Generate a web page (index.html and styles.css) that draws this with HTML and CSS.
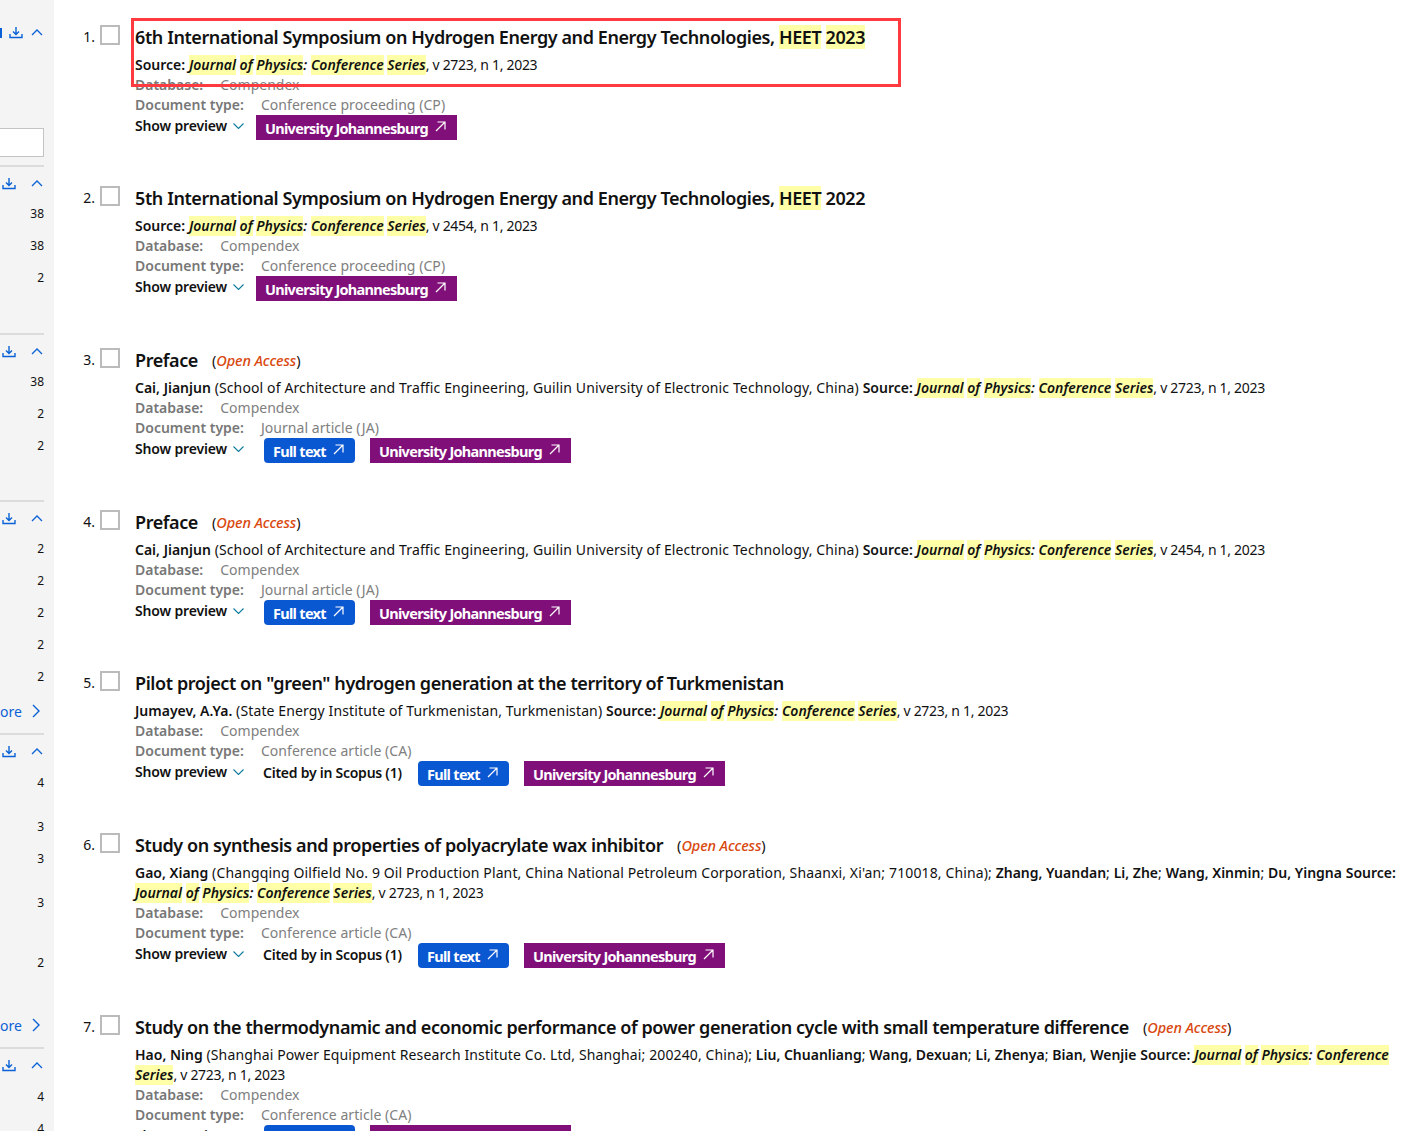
FILE: index.html
```html
<!DOCTYPE html>
<html lang="en">
<head>
<meta charset="utf-8">
<title>Results</title>
<link rel="stylesheet" href="styles.css">
</head>
<body>
<svg class="defs" width="0" height="0" aria-hidden="true">
  <symbol id="dl" viewBox="0 0 14 13"><path d="M7 1v7M4 5.5 7 8.5l3-3M1 8v3.5h12V8" fill="none" stroke="currentColor" stroke-width="1.4"/></symbol>
  <symbol id="up" viewBox="0 0 12 7"><path d="M1 6l5-5 5 5" fill="none" stroke="currentColor" stroke-width="1.3"/></symbol>
  <symbol id="right" viewBox="0 0 8 14"><path d="M1 1l6 6-6 6" fill="none" stroke="currentColor" stroke-width="1.4"/></symbol>
  <symbol id="down" viewBox="0 0 11 6"><path d="M.5.5l5 5 5-5" fill="none" stroke="currentColor" stroke-width="1.1"/></symbol>
  <symbol id="ext" viewBox="0 0 11 11"><path d="M1 10 10 1M2.5 1H10v7.5" fill="none" stroke="currentColor" stroke-width="1.2"/></symbol>
</svg>
<div class="shell">
  <aside class="side">
    <div class="head head-first"><span class="tick"></span><svg class="i-dl"><use href="#dl"/></svg><svg class="i-up"><use href="#up"/></svg></div>
    <div class="box"></div>
    <hr class="rule">
    <div class="head"><svg class="i-dl"><use href="#dl"/></svg><svg class="i-up"><use href="#up"/></svg></div>
    <div class="n">38</div><div class="n">38</div><div class="n">2</div>
    <hr class="rule r2">
    <div class="head"><svg class="i-dl"><use href="#dl"/></svg><svg class="i-up"><use href="#up"/></svg></div>
    <div class="n">38</div><div class="n">2</div><div class="n">2</div>
    <hr class="rule r3">
    <div class="head"><svg class="i-dl"><use href="#dl"/></svg><svg class="i-up"><use href="#up"/></svg></div>
    <div class="n">2</div><div class="n">2</div><div class="n">2</div><div class="n">2</div><div class="n">2</div>
    <div class="more"><span class="more-t">more</span><svg class="i-right"><use href="#right"/></svg></div>
    <hr class="rule r4">
    <div class="head"><svg class="i-dl"><use href="#dl"/></svg><svg class="i-up"><use href="#up"/></svg></div>
    <div class="n low">4</div><div class="n n2">3</div><div class="n">3</div><div class="n n2">3</div><div class="n n3">2</div>
    <div class="more m2"><span class="more-t">more</span><svg class="i-right"><use href="#right"/></svg></div>
    <hr class="rule r4">
    <div class="head"><svg class="i-dl"><use href="#dl"/></svg><svg class="i-up"><use href="#up"/></svg></div>
    <div class="n low">4</div><div class="n">4</div>
  </aside>
  <main class="results">

    <article class="item">
      <div class="num">1.</div><div class="cb"></div>
      <div class="body">
        <div class="redbox"></div>
        <h3 class="title">6th International Symposium on Hydrogen Energy and Energy Technologies, <mark>HEET</mark> <mark>2023</mark></h3>
        <p class="src"><b>Source:</b> <i><mark>Journal</mark> <mark>of</mark> <mark>Physics</mark></i><i>:</i> <i><mark>Conference</mark> <mark>Series</mark></i><span class="vol">, v 2723, n 1, 2023</span></p>
        <p class="meta"><b>Database:</b><span class="db">Compendex</span></p>
        <p class="meta"><b>Document type:</b><span class="dt">Conference proceeding (CP)</span></p>
        <div class="acts"><span class="sp">Show preview<svg class="i-down"><use href="#down"/></svg></span><a class="uni">University Johannesburg<svg class="i-ext"><use href="#ext"/></svg></a></div>
      </div>
    </article>

    <article class="item">
      <div class="num">2.</div><div class="cb"></div>
      <div class="body">
        <h3 class="title">5th International Symposium on Hydrogen Energy and Energy Technologies, <mark>HEET</mark> 2022</h3>
        <p class="src"><b>Source:</b> <i><mark>Journal</mark> <mark>of</mark> <mark>Physics</mark></i><i>:</i> <i><mark>Conference</mark> <mark>Series</mark></i><span class="vol">, v 2454, n 1, 2023</span></p>
        <p class="meta"><b>Database:</b><span class="db">Compendex</span></p>
        <p class="meta"><b>Document type:</b><span class="dt">Conference proceeding (CP)</span></p>
        <div class="acts"><span class="sp">Show preview<svg class="i-down"><use href="#down"/></svg></span><a class="uni">University Johannesburg<svg class="i-ext"><use href="#ext"/></svg></a></div>
      </div>
    </article>

    <article class="item">
      <div class="num">3.</div><div class="cb"></div>
      <div class="body">
        <h3 class="title">Preface<span class="oa">(<i>Open Access</i>)</span></h3>
        <p class="src"><b>Cai, Jianjun</b> (School of Architecture and Traffic Engineering, Guilin University of Electronic Technology, China) <b>Source:</b> <i><mark>Journal</mark> <mark>of</mark> <mark>Physics</mark></i><i>:</i> <i><mark>Conference</mark> <mark>Series</mark></i><span class="vol">, v 2723, n 1, 2023</span></p>
        <p class="meta"><b>Database:</b><span class="db">Compendex</span></p>
        <p class="meta"><b>Document type:</b><span class="dt">Journal article (JA)</span></p>
        <div class="acts"><span class="sp">Show preview<svg class="i-down"><use href="#down"/></svg></span><a class="full first">Full text<svg class="i-ext"><use href="#ext"/></svg></a><a class="uni">University Johannesburg<svg class="i-ext"><use href="#ext"/></svg></a></div>
      </div>
    </article>

    <article class="item">
      <div class="num">4.</div><div class="cb"></div>
      <div class="body">
        <h3 class="title">Preface<span class="oa">(<i>Open Access</i>)</span></h3>
        <p class="src"><b>Cai, Jianjun</b> (School of Architecture and Traffic Engineering, Guilin University of Electronic Technology, China) <b>Source:</b> <i><mark>Journal</mark> <mark>of</mark> <mark>Physics</mark></i><i>:</i> <i><mark>Conference</mark> <mark>Series</mark></i><span class="vol">, v 2454, n 1, 2023</span></p>
        <p class="meta"><b>Database:</b><span class="db">Compendex</span></p>
        <p class="meta"><b>Document type:</b><span class="dt">Journal article (JA)</span></p>
        <div class="acts"><span class="sp">Show preview<svg class="i-down"><use href="#down"/></svg></span><a class="full first">Full text<svg class="i-ext"><use href="#ext"/></svg></a><a class="uni">University Johannesburg<svg class="i-ext"><use href="#ext"/></svg></a></div>
      </div>
    </article>

    <article class="item">
      <div class="num">5.</div><div class="cb"></div>
      <div class="body">
        <h3 class="title">Pilot project on "green" hydrogen generation at the territory of Turkmenistan</h3>
        <p class="src"><b>Jumayev, A.Ya.</b> (State Energy Institute of Turkmenistan, Turkmenistan) <b>Source:</b> <i><mark>Journal</mark> <mark>of</mark> <mark>Physics</mark></i><i>:</i> <i><mark>Conference</mark> <mark>Series</mark></i><span class="vol">, v 2723, n 1, 2023</span></p>
        <p class="meta"><b>Database:</b><span class="db">Compendex</span></p>
        <p class="meta"><b>Document type:</b><span class="dt">Conference article (CA)</span></p>
        <div class="acts"><span class="sp">Show preview<svg class="i-down"><use href="#down"/></svg></span><span class="cited">Cited by in Scopus (1)</span><a class="full">Full text<svg class="i-ext"><use href="#ext"/></svg></a><a class="uni">University Johannesburg<svg class="i-ext"><use href="#ext"/></svg></a></div>
      </div>
    </article>

    <article class="item">
      <div class="num">6.</div><div class="cb"></div>
      <div class="body">
        <h3 class="title">Study on synthesis and properties of polyacrylate wax inhibitor<span class="oa">(<i>Open Access</i>)</span></h3>
        <p class="src"><b>Gao, Xiang</b> (Changqing Oilfield No. 9 Oil Production Plant, China National Petroleum Corporation, Shaanxi, Xi'an; 710018, China); <b>Zhang, Yuandan</b>; <b>Li, Zhe</b>; <b>Wang, Xinmin</b>; <b>Du, Yingna</b> <b>Source:</b> <i><mark>Journal</mark> <mark>of</mark> <mark>Physics</mark></i><i>:</i> <i><mark>Conference</mark> <mark>Series</mark></i><span class="vol">, v 2723, n 1, 2023</span></p>
        <p class="meta"><b>Database:</b><span class="db">Compendex</span></p>
        <p class="meta"><b>Document type:</b><span class="dt">Conference article (CA)</span></p>
        <div class="acts"><span class="sp">Show preview<svg class="i-down"><use href="#down"/></svg></span><span class="cited">Cited by in Scopus (1)</span><a class="full">Full text<svg class="i-ext"><use href="#ext"/></svg></a><a class="uni">University Johannesburg<svg class="i-ext"><use href="#ext"/></svg></a></div>
      </div>
    </article>

    <article class="item">
      <div class="num">7.</div><div class="cb"></div>
      <div class="body">
        <h3 class="title">Study on the thermodynamic and economic performance of power generation cycle with small temperature difference<span class="oa">(<i>Open Access</i>)</span></h3>
        <p class="src"><b>Hao, Ning</b> (Shanghai Power Equipment Research Institute Co. Ltd, Shanghai; 200240, China); <b>Liu, Chuanliang</b>; <b>Wang, Dexuan</b>; <b>Li, Zhenya</b>; <b>Bian, Wenjie</b> <b>Source:</b> <i><mark>Journal</mark> <mark>of</mark> <mark>Physics</mark></i><i>:</i> <i><mark>Conference</mark> <mark>Series</mark></i><span class="vol">, v 2723, n 1, 2023</span></p>
        <p class="meta"><b>Database:</b><span class="db">Compendex</span></p>
        <p class="meta"><b>Document type:</b><span class="dt">Conference article (CA)</span></p>
        <div class="acts"><span class="sp">Show preview<svg class="i-down"><use href="#down"/></svg></span><a class="full first">Full text<svg class="i-ext"><use href="#ext"/></svg></a><a class="uni">University Johannesburg<svg class="i-ext"><use href="#ext"/></svg></a></div>
      </div>
    </article>

  </main>
</div>
</body>
</html>
```
FILE: styles.css
```css
html, body { margin: 0; padding: 0; height: 1131px; overflow: hidden; background: #fff; }
body { font-family: "Noto Sans", "Open Sans", sans-serif; font-size: 14px; color: #111; }
.defs { position: absolute; }
.shell { display: flex; height: 1131px; overflow: hidden; }

.side { flex: 0 0 54px; width: 54px; box-sizing: border-box; background: #f4f4f4; padding: 22px 10px 0 0; display: flex; flex-direction: column; overflow: hidden; }
.side > * { flex-shrink: 0; }
.head { position: relative; height: 20px; display: flex; align-items: center; justify-content: space-between; color: #0a62d6; padding-left: 2px; }
.head-first { padding-left: 9px; }
.tick { position: absolute; left: 0; top: 6px; width: 2px; height: 10px; background: #0a62d6; }
.i-dl { width: 14px; height: 13px; }
.i-up { width: 12px; height: 7px; margin-right: 1px; }
.i-right { flex: none; width: 8px; height: 14px; margin-left: 10px; margin-right: 4px; }
.box { height: 27px; margin-top: 86px; border: 1px solid #c4c4c4; border-left: 0; background: #fff; }
.rule { width: 100%; margin: 8px 0 6px; border: 0; height: 2px; background: #dcdcdc; }
.r2 { margin-top: 34px; }
.r3 { margin-top: 33px; }
.r4 { margin-top: 12px; }
.n { height: 32px; padding-top: 1px; line-height: 20px; box-sizing: border-box; text-align: right; font-size: 12px; }
.head + .n { margin-top: 10px; }
.head + .n.low { margin-top: 11px; }
.n2 { height: 44px; padding-top: 13px; }
.n3 { height: 60px; padding-top: 29px; }
.more { display: flex; justify-content: flex-end; align-items: center; height: 20px; margin-top: 3px; color: #0a62d6; font-size: 14px; white-space: nowrap; }
.more-t { flex: none; }
.m2 { margin-top: 31px; }

.results { flex: 1; min-width: 0; padding: 22.8px 22px 0 0; }
.item { display: grid; grid-template-columns: 46px 20px 1fr; margin-bottom: 44.65px; align-items: start; }
.num { text-align: right; padding-right: 5px; font-size: 14px; line-height: 28px; }
.cb { width: 20px; height: 20px; box-sizing: border-box; border: 2px solid #bbb; background: #fff; margin-top: 2px; }
.body { position: relative; margin-left: 15px; }
.redbox { position: absolute; left: -4px; top: -5px; width: 770px; height: 69px; box-sizing: border-box; border: 3px solid #ff3b3f; pointer-events: none; }
.title { margin: 0 0 4px; height: 28px; font-size: 18px; line-height: 28px; font-weight: 600; letter-spacing: -.41px; color: #111; white-space: nowrap; }
.oa { margin-left: 14px; font-size: 14.5px; line-height: 14px; font-weight: 400; letter-spacing: 0; vertical-align: 1px; }
.oa i { color: #d9480f; font-weight: 500; letter-spacing: -.1px; }
.src { margin: 0; line-height: 20px; letter-spacing: .125px; }
.src b { font-weight: 600; letter-spacing: 0; }
.src i { font-weight: 600; letter-spacing: 0; }
.vol { letter-spacing: -.3px; }
mark { background: #ffffa8; color: inherit; }
.src mark { display: inline-block; line-height: 20px; }
.meta { margin: 0; line-height: 20px; color: #808080; }
.meta b { font-weight: 600; color: #777; }
.db { margin-left: 17px; }
.dt { margin-left: 17px; letter-spacing: .05px; }
.acts { display: flex; align-items: flex-start; height: 25px; }
.sp { font-weight: 600; letter-spacing: -.15px; line-height: 20px; padding-top: 1px; white-space: nowrap; width: 121px; flex: none; display: flex; align-items: center; }
.i-down { width: 11px; height: 6px; margin-left: 6px; color: #0b7a9b; }
.cited { font-weight: 600; line-height: 24px; margin-left: 7px; width: 155px; flex: none; white-space: nowrap; letter-spacing: -.25px; }
.full, .uni { display: flex; align-items: flex-start; height: 25px; padding-left: 9px; line-height: 27px; box-sizing: border-box; color: #fff; font-weight: 700; font-size: 14.5px; letter-spacing: -.7px; white-space: nowrap; flex: none; }
.full { width: 91px; background: #0a57d2; border-radius: 4px; margin-right: 15px; }
.full.first { margin-left: 8px; }
.uni { width: 201px; background: #800f7a; }
.i-ext { flex: none; width: 11px; height: 11px; margin: 6px 0 0 7px; }
```
